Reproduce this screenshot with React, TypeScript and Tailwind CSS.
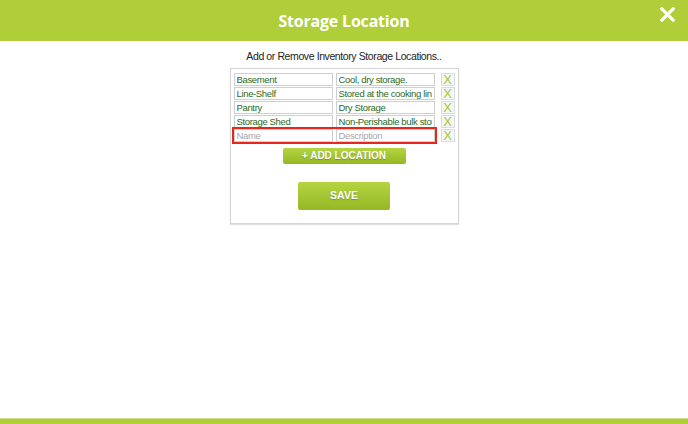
import React from "react";

const rows = [
  { name: "Basement", desc: "Cool, dry storage." },
  { name: "Line-Shelf", desc: "Stored at the cooking line" },
  { name: "Pantry", desc: "Dry Storage" },
  { name: "Storage Shed", desc: "Non-Perishable bulk storage" },
];

const inputCls =
  "h-[13px] w-[99px] border border-[#cfcfcf] bg-white px-[2px] text-[9.5px] leading-[11px] tracking-[-0.35px] text-[#2d6a1d] outline-none placeholder:text-[#a8a8a8]";

const RemoveBox = () => (
  <div className="flex h-[13px] w-[14px] items-center justify-center border border-[#dcdcdc] bg-[#f7f7f7] text-[13px] leading-none text-[#a4c83a]">
    X
  </div>
);

const App = () => {
  return (
    <div className="relative flex h-[424px] w-[688px] flex-col bg-white font-['Liberation_Sans',Arial,sans-serif]">
      {/* Header */}
      <div className="relative flex h-[41px] items-center justify-center bg-[#b0cd3a]">
        <h1 className="font-['Open_Sans',sans-serif] text-[16px] font-bold tracking-[-0.2px] text-white">Storage Location</h1>
        <button className="absolute right-[13px] top-[7px] text-white">
          <svg width="15" height="15" viewBox="0 0 16 16">
            <path d="M2 2 L14 14 M14 2 L2 14" stroke="white" strokeWidth="3.4" strokeLinecap="square" />
          </svg>
        </button>
      </div>

      <p className="mt-[8px] text-center text-[10.5px] leading-[14px] tracking-[-0.4px] text-[#222]">
        Add or Remove Inventory Storage Locations..
      </p>

      {/* Panel */}
      <div className="mx-auto mt-[5px] flex flex-col border border-[#d4d4d4] pb-[13px] pl-[3px] pr-[3px] pt-[4px] shadow-[0_1px_1px_rgba(0,0,0,0.12)]">
        <div className="flex flex-col gap-px">
          {rows.map((r) => (
            <div key={r.name} className="flex items-center">
              <div className="flex gap-[3px]">
                <input className={inputCls} defaultValue={r.name} />
                <input className={inputCls} defaultValue={r.desc} />
              </div>
              <div className="ml-[6px]">
                <RemoveBox />
              </div>
            </div>
          ))}
          <div className="flex items-center">
            <div className="-m-px flex gap-[3px] border border-[#e8261c] outline outline-1 outline-[#e8261c]">
              <input className={inputCls} placeholder="Name" />
              <input className={inputCls} placeholder="Description" />
            </div>
            <div className="ml-[6px]">
              <RemoveBox />
            </div>
          </div>
        </div>

        <button className="mx-auto mt-[6px] h-[16px] w-[123px] rounded-[2px] bg-gradient-to-b from-[#b6d442] to-[#94b823] text-[10px] font-bold leading-[16px] text-white [text-shadow:0_1px_1px_rgba(0,0,0,0.25)]">
          + ADD LOCATION
        </button>

        <button className="mx-auto mt-[18px] h-[28px] w-[92px] rounded-[2px] bg-gradient-to-b from-[#b6d442] to-[#94b823] text-[10.5px] font-bold text-white [text-shadow:0_1px_1px_rgba(0,0,0,0.25)]">
          SAVE
        </button>
      </div>

      {/* Footer bar */}
      <div className="mt-auto h-[6px] border-t border-[#cfe08a] bg-[#b0cd3a]" />
    </div>
  );
};

export default App;
